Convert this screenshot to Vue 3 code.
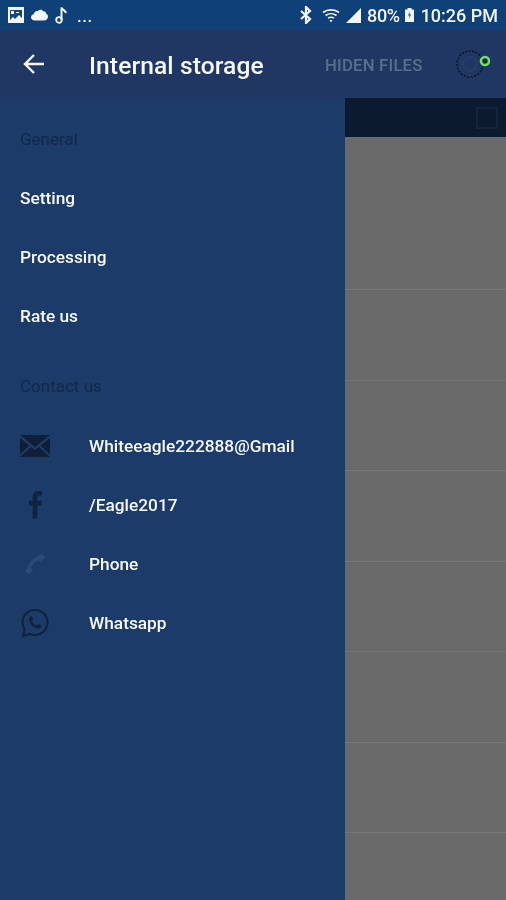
<template>
  <div class="screen">
    <div class="status">
      <div class="status-left">
        <svg width="16" height="16" viewBox="0 0 16 16"><path fill="#f2f5fa" d="M0 0h16v16H0z"/><path fill="#17457f" d="M2 3h12v8l-3-3-4 4-2-2-3 3z"/><path fill="#f2f5fa" d="M3 4h3v3H3zM8 5h3v1H8z"/></svg>
        <svg width="17" height="12" viewBox="0 0 17 12"><path fill="#f2f5fa" d="M4 11.5C1.500 11.500 0 10 0 8.300 0 6.700 1.200 5.500 2.700 5.300 3.200 3 5 1.500 7 2c1-1.500 4-1.700 5 .3 2-.2 3.200 1 3.200 2.500 1.200.5 1.800 1.500 1.800 2.700 0 2-1.500 4-4 4z"/></svg>
        <svg width="13" height="18" viewBox="0 0 13 18"><path fill="none" stroke="#f2f5fa" stroke-width="2" d="M6.500 14V1.500c1 2.500 4 3 4.500 5.500"/><circle cx="4" cy="14" r="2.800" fill="none" stroke="#f2f5fa" stroke-width="1.800"/></svg>
        <span class="dots">...</span>
      </div>
      <div class="status-right">
        <svg width="14" height="18" viewBox="0 0 14 18"><path fill="none" stroke="#f2f5fa" stroke-width="2.200" d="M2 5l9 8-4 4V1l4 4-9 8"/></svg>
        <svg class="wifi" width="18" height="15" viewBox="0 0 18 15"><path fill="none" stroke="#f2f5fa" stroke-width="1.600" d="M1 4.500c4.500-3.500 11.500-3.500 16 0M3.500 7.500c3.200-2.400 7.800-2.400 11 0M6 10.200c1.800-1.200 4.200-1.200 6 0"/><path fill="#f2f5fa" d="M7.500 12h3L9 14.500z"/></svg>
        <svg class="signal" width="15" height="15" viewBox="0 0 15 15"><path fill="#f2f5fa" d="M15 0v15H0z"/></svg>
        <span class="pct">80%</span>
        <svg class="batt" width="9" height="14" viewBox="0 0 9 14"><path fill="#f2f5fa" d="M2.500 0h4v1.500H9V14H0V1.500h2.500z"/><path fill="#17457f" d="M5 3L3 7.500h1.500L4 11l2-4.500H4.500z"/></svg>
        <span class="time">10:26 PM</span>
      </div>
    </div>

    <div class="main">
      <aside class="drawer">
        <div class="drawer-head">
          <svg width="24" height="24" viewBox="0 0 24 24" class="back"><path fill="none" stroke="#f4f6fb" stroke-width="2.400" d="M22 12H3M12 3l-9 9 9 9"/></svg>
          <span class="title">Internal storage</span>
        </div>
        <div class="section first">General</div>
        <div class="item">Setting</div>
        <div class="item">Processing</div>
        <div class="item">Rate us</div>
        <div class="section second">Contact us</div>
        <div class="contact">
          <span class="ico"><svg width="30" height="22" viewBox="0 0 30 22"><path fill="#0f1f38" d="M0 0h30L15 12zM0 3l9.500 7.500L0 19.500zM30 3l-9.500 7.500 9.500 9zM0 22l11-10 4 3 4-3 11 10z"/></svg></span>
          <span class="label">Whiteeagle222888@Gmail</span>
        </div>
        <div class="contact">
          <span class="ico"><svg width="15" height="29" viewBox="0 0 16 30"><path fill="#12233f" d="M5 30V16H1v-5h4V7c0-4 2.500-6.500 6-6.500 1.500 0 3 .1 4 .3v4.500h-2.600C10.500 5.300 10 6.300 10 8v3h5l-.8 5H10v14z"/></svg></span>
          <span class="label">/Eagle2017</span>
        </div>
        <div class="contact">
          <span class="ico"><svg width="22" height="22" viewBox="0 0 24 24"><path fill="#2a4a73" d="M20 1l3.500 4-5.500 4.500-2.500-2C12 9.500 9 12.500 7.500 16l2.500 2.500L5.500 23.500 2 21C2 14 10 3 20 1z"/></svg></span>
          <span class="label">Phone</span>
        </div>
        <div class="contact">
          <span class="ico"><svg width="28" height="30" viewBox="0 0 28 30"><path fill="none" stroke="#12233f" stroke-width="2.200" d="M14 2C7 2 1.500 7.500 1.500 14.300c0 2.700.8 5 2.200 7L2 28l7-2c1.500.6 3.200 1 5 1 7 0 12.500-5.700 12.500-12.700S21 2 14 2z"/><path fill="#12233f" d="M10 8c-1 .3-2 1.500-2 3 0 4.500 5 9.500 9.500 9.500 1.700 0 3-1.200 3-2.500 0-.8-2.500-2-3.200-2-.6 0-1 1.200-1.600 1.200C14 17 11.500 14.500 11 13c0-.7 1.200-1.200 1.200-1.800C12.200 10.500 11 8 10 8z"/></svg></span>
          <span class="label">Whatsapp</span>
        </div>
      </aside>

      <div class="side">
        <div class="side-head">
          <span class="hidden">HIDEN FILES</span>
          <span class="loader">
            <svg width="34" height="32" viewBox="0 0 34 32"><circle cx="14" cy="17" r="13" fill="none" stroke="#0c182a" stroke-width="1.600" stroke-dasharray="2 1.500"/><circle cx="14" cy="17" r="7" fill="none" stroke="#2c456d" stroke-width="1"/><circle cx="29" cy="14" r="4" fill="#0f3020" stroke="#6fe06a" stroke-width="2.600"/></svg>
          </span>
        </div>
        <div class="strip"><span class="check"></span></div>
        <div class="list">
          <div class="row first-row"></div>
          <div v-for="n in 6" :key="n" class="row"></div>
        </div>
      </div>
    </div>
  </div>
</template>

<script setup>
</script>

<style>
html, body { margin: 0; background: #6a6a6a; }
</style>

<style scoped>
.screen { width: 506px; height: 900px; overflow: hidden; display: flex; flex-direction: column; font-family: Roboto, "Liberation Sans", sans-serif; background: #1c3b68; filter: blur(.4px); }
.status { height: 30px; flex: none; background: #0f4078; display: flex; justify-content: space-between; align-items: center; color: #f2f5fa; padding: 0 8px; box-sizing: border-box; }
.status-left { display: flex; align-items: center; gap: 7px; }
.dots { font-size: 17px; line-height: 17px; font-weight: 500; letter-spacing: .5px; margin-left: 2px; margin-top: 2px; }
.status-right { display: flex; align-items: center; }
.wifi { margin-left: 9px; }
.signal { margin-left: 6px; }
.pct { font-size: 18px; font-weight: 500; margin-left: 6px; letter-spacing: -.4px; }
.batt { margin-left: 5px; }
.time { font-size: 18px; font-weight: 500; margin-left: 7px; }
.main { flex: 1; display: flex; min-height: 0; }
.drawer { width: 345px; flex: none; background: #1c3b68; display: flex; flex-direction: column; }
.drawer-head { height: 68px; flex: none; background: #1f3762; display: flex; align-items: center; padding-left: 22px; box-sizing: border-box; }
.back { display: block; }
.title { font-size: 24.6px; font-weight: 500; color: #f6f8fc; margin-left: 43px; margin-top: 3px; letter-spacing: .1px; }
.section { font-size: 17px; color: #13294a; padding-left: 20px; height: 20px; line-height: 20px; }
.first { margin-top: 31px; margin-bottom: 19px; }
.second { margin-top: 31px; margin-bottom: 20px; }
.item { height: 59px; line-height: 20px; padding: 20px 20px 0; box-sizing: border-box; font-size: 17.3px; font-weight: 500; color: #f6f8fc; }
.contact { height: 59px; display: flex; align-items: center; flex: none; }
.ico { width: 89px; padding: 0 39px 0 20px; box-sizing: border-box; flex: none; display: flex; align-items: center; justify-content: center; }
.ico svg { display: block; flex: none; }
.label { font-size: 17.3px; font-weight: 500; color: #f6f8fc; }
.side { flex: 1; display: flex; flex-direction: column; min-width: 0; }
.side-head { height: 68px; flex: none; background: #1f3762; display: flex; align-items: center; justify-content: space-between; box-sizing: border-box; }
.hidden { font-size: 16.700px; font-weight: 500; color: #56708f; margin-left: -20px; margin-top: 2px; letter-spacing: .2px; }
.loader { margin-right: 16px; margin-top: -2px; display: block; height: 32px; }
.strip { height: 39px; flex: none; background: #0b1a2e; display: flex; align-items: center; justify-content: flex-end; padding-right: 8px; box-sizing: border-box; }
.check { width: 18px; height: 18px; border: 2px solid #16243a; display: block; }
.list { flex: 1; background: #6a6a6a; }
.row { height: 90.500px; border-bottom: 1px solid #767676; box-sizing: border-box; }
.first-row { height: 153px; }
</style>
